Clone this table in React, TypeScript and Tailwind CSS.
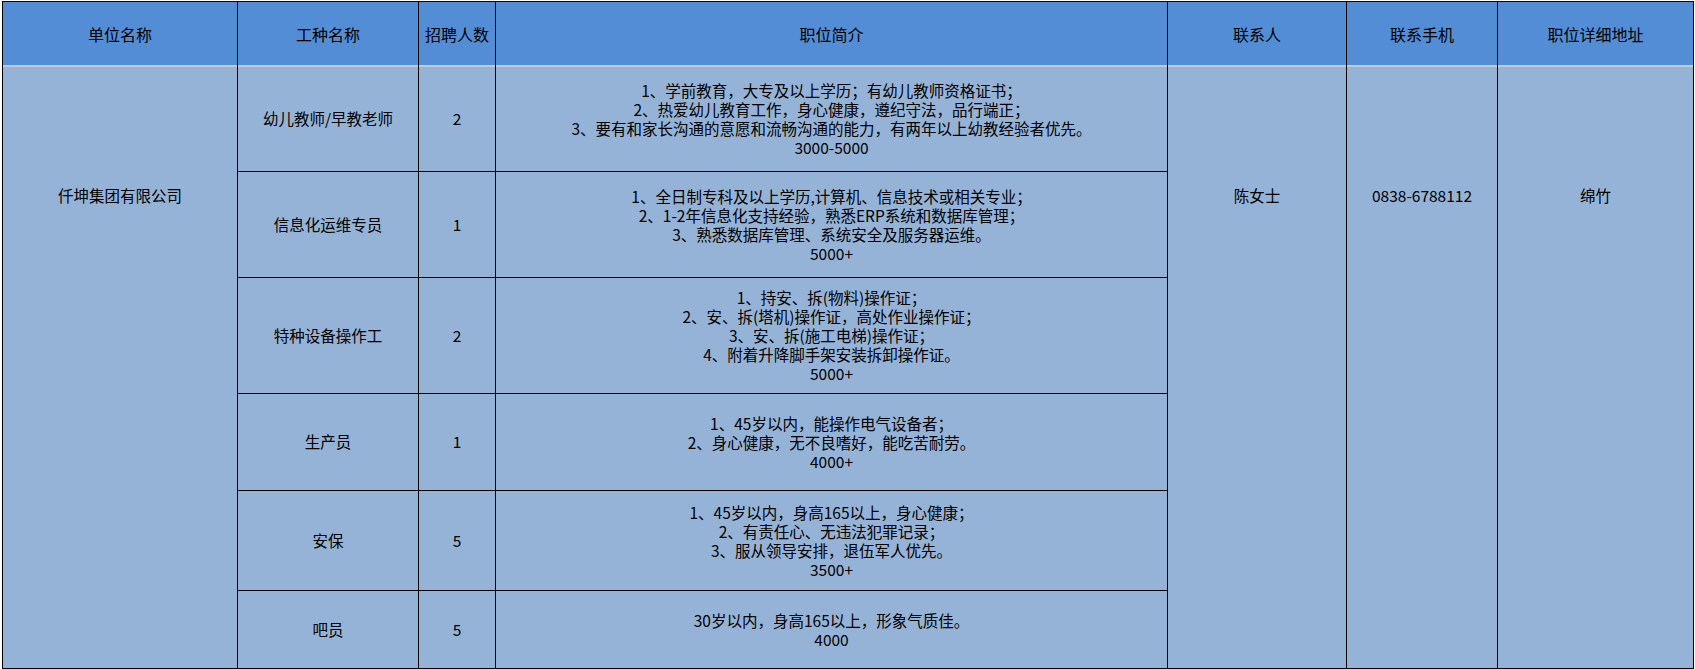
const headers = ["单位名称", "工种名称", "招聘人数", "职位简介", "联系人", "联系手机", "职位详细地址"];

const jobs = [
  {
    name: "幼儿教师/早教老师",
    count: "2",
    lines: [
      "1、学前教育，大专及以上学历；有幼儿教师资格证书；",
      "2、热爱幼儿教育工作，身心健康，遵纪守法，品行端正；",
      "3、要有和家长沟通的意愿和流畅沟通的能力，有两年以上幼教经验者优先。",
      "3000-5000",
    ],
  },
  {
    name: "信息化运维专员",
    count: "1",
    lines: [
      "1、全日制专科及以上学历,计算机、信息技术或相关专业；",
      "2、1-2年信息化支持经验，熟悉ERP系统和数据库管理；",
      "3、熟悉数据库管理、系统安全及服务器运维。",
      "5000+",
    ],
  },
  {
    name: "特种设备操作工",
    count: "2",
    lines: [
      "1、持安、拆(物料)操作证；",
      "2、安、拆(塔机)操作证，高处作业操作证；",
      "3、安、拆(施工电梯)操作证；",
      "4、附着升降脚手架安装拆卸操作证。",
      "5000+",
    ],
  },
  {
    name: "生产员",
    count: "1",
    lines: ["1、45岁以内，能操作电气设备者；", "2、身心健康，无不良嗜好，能吃苦耐劳。", "4000+"],
  },
  {
    name: "安保",
    count: "5",
    lines: [
      "1、45岁以内，身高165以上，身心健康；",
      "2、有责任心、无违法犯罪记录；",
      "3、服从领导安排，退伍军人优先。",
      "3500+",
    ],
  },
  {
    name: "吧员",
    count: "5",
    lines: ["30岁以内，身高165以上，形象气质佳。", "4000"],
  },
];

const cols = "grid grid-cols-[234px_180px_76px_671px_178px_150px_195px] gap-x-px";

export default function App() {
  return (
    <div className="w-[1695px] h-[669px] bg-white pt-px pl-[2px] font-['Noto_Sans_CJK_SC','Noto_Sans',sans-serif] text-black">
      <div className="w-fit bg-black p-px">
        {/* 表头 */}
        <div className={cols}>
          {headers.map((h) => (
            <div
              key={h}
              className="h-[65px] bg-[#538dd5] border-b-2 border-[#c8c8c8] flex items-center justify-center text-[16px]"
            >
              {h}
            </div>
          ))}
        </div>

        {/* 内容 */}
        <div className={`${cols} gap-y-px grid-rows-[104px_105px_115px_96px_99px_77px] text-[15.5px]`}>
          <div className="row-span-6 bg-[#95b3d7] flex justify-center pt-[117px]">仟坤集团有限公司</div>
          {jobs.map((job, i) => (
            <JobRow key={job.name} job={job} first={i === 0} />
          ))}
        </div>
      </div>
    </div>
  );
}

function JobRow({ job, first }: { job: (typeof jobs)[number]; first: boolean }) {
  return (
    <>
      <div className="bg-[#95b3d7] flex items-center justify-center">{job.name}</div>
      <div className="bg-[#95b3d7] flex items-center justify-center">{job.count}</div>
      <div className="bg-[#95b3d7] flex flex-col items-center justify-center leading-[19px] text-center">
        {job.lines.map((l) => (
          <span key={l}>{l}</span>
        ))}
      </div>
      {first && (
        <>
          <div className="row-span-6 bg-[#95b3d7] flex justify-center pt-[117px]">陈女士</div>
          <div className="row-span-6 bg-[#95b3d7] flex justify-center pt-[117px]">0838-6788112</div>
          <div className="row-span-6 bg-[#95b3d7] flex justify-center pt-[117px]">绵竹</div>
        </>
      )}
    </>
  );
}
